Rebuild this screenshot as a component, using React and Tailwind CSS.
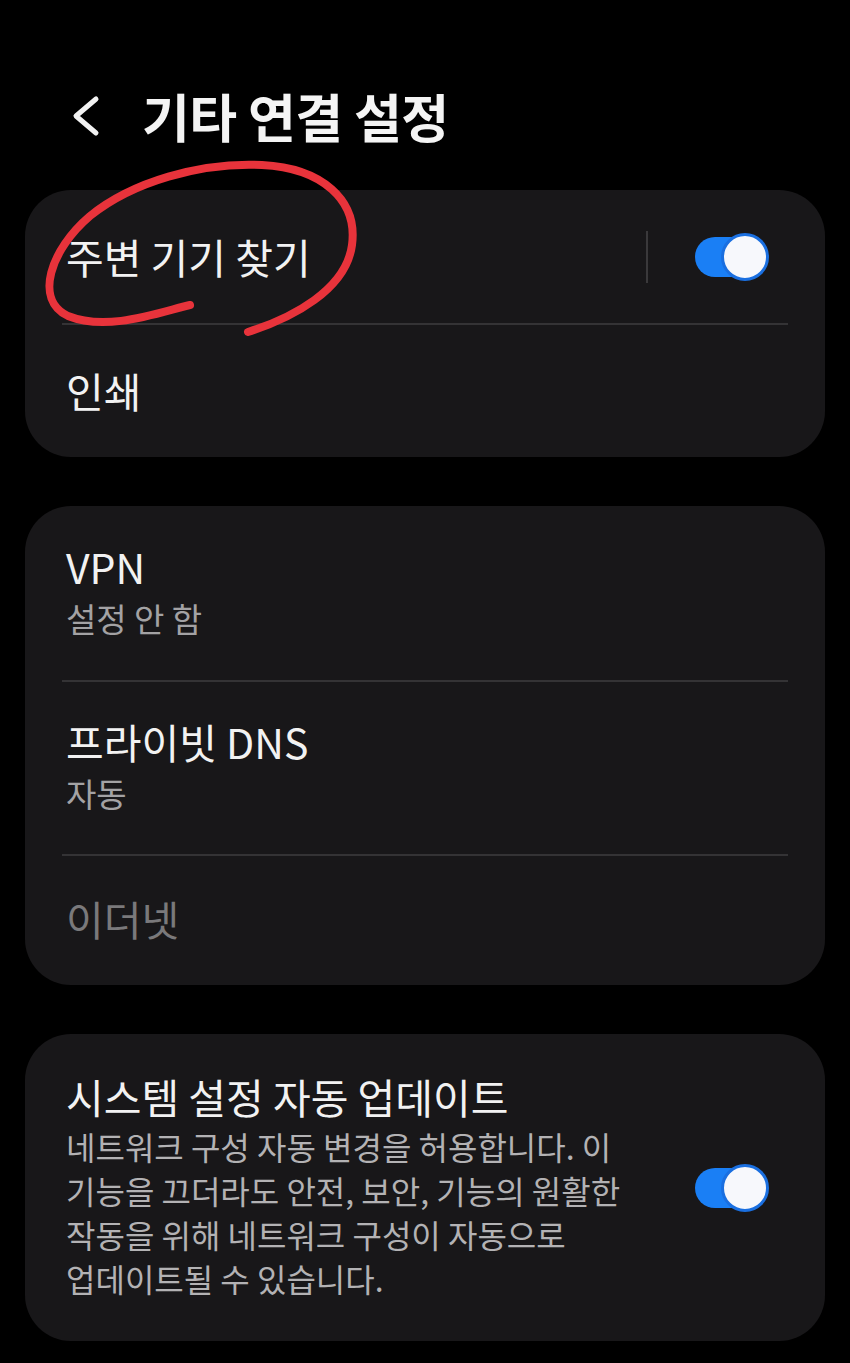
import React from "react";

const font = { fontFamily: '"Noto Sans CJK KR", "Noto Sans", sans-serif' };

function Toggle() {
  return (
    <div className="relative w-[74px] h-[48px] shrink-0">
      <div className="absolute left-0 top-[4px] w-[60px] h-[40px] rounded-full bg-[#1a7ff5]" />
      <div className="absolute right-0 top-0 w-[48px] h-[48px] rounded-full bg-[#f7f8fc] border-[3px] border-[#1a6fe0]" />
    </div>
  );
}

function Divider() {
  return <div className="mx-[37px] h-[2px] bg-[#343335]" />;
}

export default function App() {
  return (
    <div className="w-[850px] h-[1363px] bg-black relative overflow-hidden" style={font}>
      {/* Header */}
      <div className="h-[190px] flex items-center pt-[42px]">
        <svg className="ml-[68px]" width="34" height="44" viewBox="0 0 34 44">
          <path d="M28 5 L8 22 L28 39" fill="none" stroke="#f2f2f2" strokeWidth="5" strokeLinecap="round" strokeLinejoin="round" />
        </svg>
        <div className="ml-[40px] text-[52px] leading-[60px] font-bold text-[#f4f4f4] tracking-[-0.5px]">기타 연결 설정</div>
      </div>

      <div className="px-[25px] flex flex-col gap-[49px]">
        {/* Card 1 */}
        <div className="rounded-[46px] bg-[#181719]">
          <div className="h-[133px] flex items-center pl-[41px] pr-[56px]">
            <div className="flex-1 text-[41px] text-[#f2f2f2]">주변 기기 찾기</div>
            <div className="w-[2px] h-[52px] bg-[#3a393b] mr-[47px]" />
            <Toggle />
          </div>
          <Divider />
          <div className="h-[132px] flex items-center pl-[41px]">
            <div className="text-[41px] text-[#f2f2f2]">인쇄</div>
          </div>
        </div>

        {/* Card 2 */}
        <div className="rounded-[46px] bg-[#181719]">
          <div className="h-[174px] flex flex-col justify-center pl-[41px] pb-[4px]">
            <div className="text-[41px] leading-[54px] text-[#f2f2f2]">VPN</div>
            <div className="text-[33px] leading-[50px] text-[#a3a2a4]">설정 안 함</div>
          </div>
          <Divider />
          <div className="h-[172px] flex flex-col justify-center pl-[41px] pb-[4px]">
            <div className="text-[41px] leading-[54px] text-[#f2f2f2]">프라이빗 DNS</div>
            <div className="text-[33px] leading-[50px] text-[#a3a2a4]">자동</div>
          </div>
          <Divider />
          <div className="h-[129px] flex items-center pl-[41px] pb-[4px]">
            <div className="text-[41px] text-[#7a797b]">이더넷</div>
          </div>
        </div>

        {/* Card 3 */}
        <div className="rounded-[46px] bg-[#181719] h-[307px] flex items-center pl-[41px] pr-[56px]">
          <div className="flex-1">
            <div className="text-[41px] leading-[52px] text-[#f2f2f2] whitespace-nowrap -mt-[6px]">시스템 설정 자동 업데이트</div>
            <div className="text-[32px] leading-[44px] text-[#b3b2b4] whitespace-nowrap mt-[2px]">
              <div>네트워크 구성 자동 변경을 허용합니다. 이</div>
              <div>기능을 끄더라도 안전, 보안, 기능의 원활한</div>
              <div>작동을 위해 네트워크 구성이 자동으로</div>
              <div>업데이트될 수 있습니다.</div>
            </div>
          </div>
          <Toggle />
        </div>
      </div>

      {/* Red annotation */}
      <svg className="absolute left-0 top-0 pointer-events-none" width="850" height="400" viewBox="0 0 850 400">
        <path
          d="M248 332 C292 318 346 290 352 245 C358 200 322 168 262 165 C200 162 132 182 90 216 C50 250 34 300 68 316 C108 332 160 312 190 305"
          fill="none"
          stroke="#e8333b"
          strokeWidth="8"
          strokeLinecap="round"
          strokeLinejoin="round"
        />
      </svg>
    </div>
  );
}
